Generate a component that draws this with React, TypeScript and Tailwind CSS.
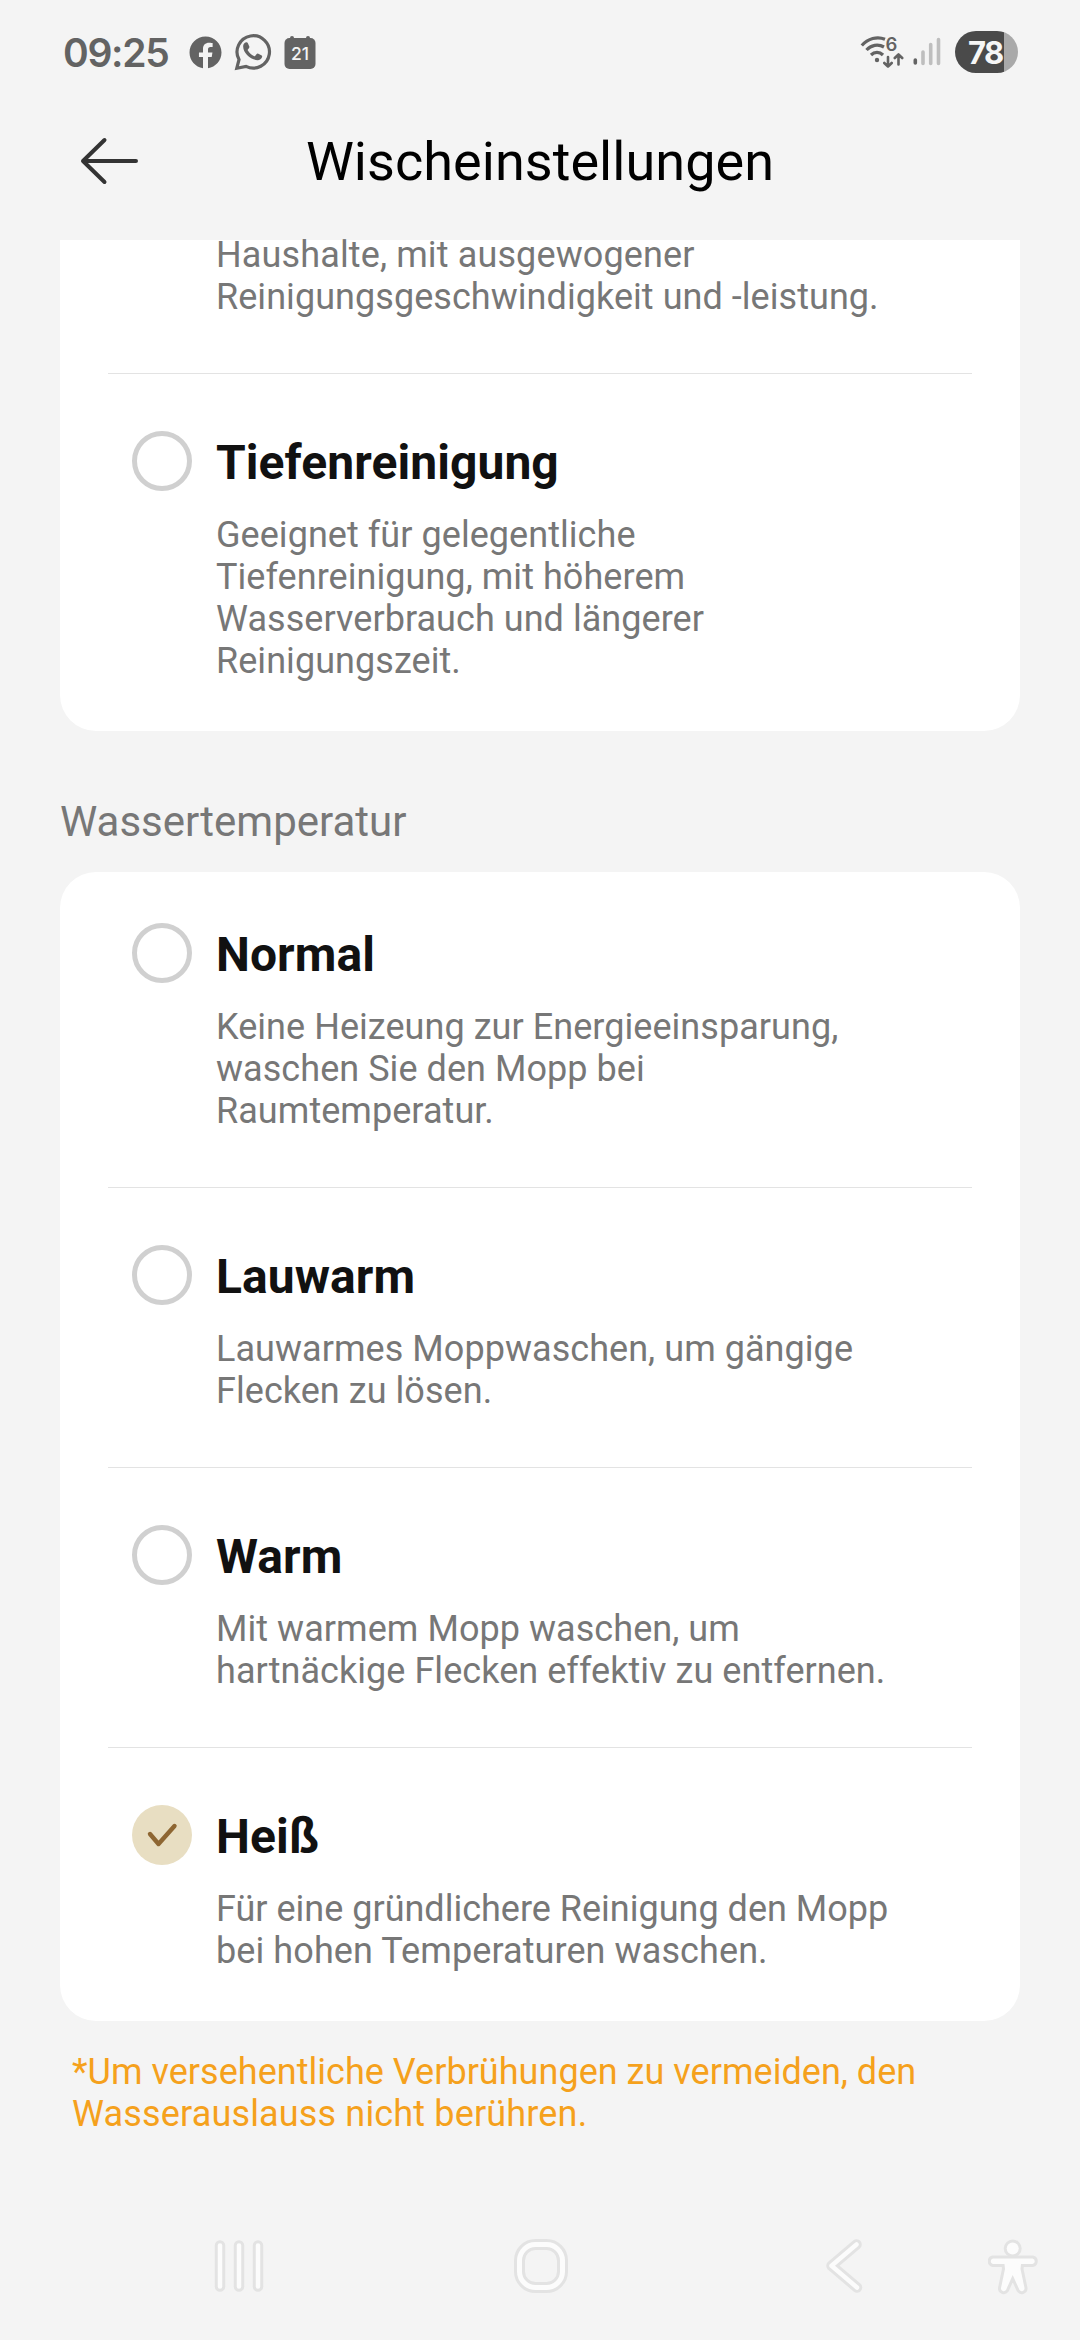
import React from "react";
import { FaFacebook } from "react-icons/fa";

type Line = { text: string; tracking?: string };
type Option = { title: string; lines: Line[]; selected?: boolean };

const temperatures: Option[] = [
  {
    title: "Normal",
    lines: [{ text: "Keine Heizeung zur Energieeinsparung," }, { text: "waschen Sie den Mopp bei" }, { text: "Raumtemperatur." }],
  },
  { title: "Lauwarm", lines: [{ text: "Lauwarmes Moppwaschen, um gängige" }, { text: "Flecken zu lösen." }] },
  { title: "Warm", lines: [{ text: "Mit warmem Mopp waschen, um" }, { text: "hartnäckige Flecken effektiv zu entfernen." }] },
  {
    title: "Heiß",
    lines: [
      { text: "Für eine gründlichere Reinigung den Mopp", tracking: "tracking-normal" },
      { text: "bei hohen Temperaturen waschen.", tracking: "tracking-[0.09px]" },
    ],
    selected: true,
  },
];

function Description({ lines }: { lines: Line[] }) {
  return (
    <p className="text-[36px] leading-[42px] whitespace-nowrap text-[#777777]">
      {lines.map(({ text, tracking = "tracking-[0.05px]" }) => (
        <span key={text} className={`block ${tracking}`}>{text}</span>
      ))}
    </p>
  );
}

function Radio({ selected }: { selected?: boolean }) {
  if (!selected) {
    return <span className="size-[60px] shrink-0 rounded-full border-[5px] border-[#d0d0d0]" />;
  }
  return (
    <span className="flex size-[60px] shrink-0 items-center justify-center rounded-full bg-[#e8dec2]">
      <svg className="size-[60px]" viewBox="0 0 60 60" fill="none" stroke="#8e6632" strokeWidth="4.4" strokeLinecap="round" strokeLinejoin="round">
        <path d="M18 29 L26.5 39 L42.5 21" />
      </svg>
    </span>
  );
}

function OptionRow({ option }: { option: Option }) {
  return (
    <div className="flex gap-6 px-[72px]">
      <Radio selected={option.selected} />
      <div className="pt-1">
        <h3 className="mb-[23px] text-[48px] leading-[56px] font-bold tracking-[0.07px] text-[#111111]">{option.title}</h3>
        <Description lines={option.lines} />
      </div>
    </div>
  );
}

function Divider() {
  return <hr className="mx-12 mt-[55px] mb-[57px] h-px border-0 bg-[#e3e3e3]" />;
}

function StatusBar() {
  return (
    <div className="flex h-[104px] items-center pr-[62px] pl-[63px] text-[#636363]">
      <span className="w-[126px] font-[Inter,sans-serif] text-[39px] leading-none font-semibold tracking-[-1.3px]">09:25</span>
      <FaFacebook className="size-[33px]" />
      <svg className="ml-[12px] h-[38px] w-[38px]" viewBox="0 0 38 38">
        <path d="M2.8 35.2 L5 26.6 A16.2 16.2 0 1 1 12 33.4 Z" fill="none" stroke="currentColor" strokeWidth="3.2" />
        <path
          transform="translate(-1.3 -0.7)"
          d="M10.5 13.5c.2-1.8 1.3-3.2 2.8-3.6 1-.2 1.5.1 1.9 1l1.4 3.2c.3.8.1 1.2-.4 1.8l-1 1.2c-.3.4-.3.7 0 1.2 1.5 2.5 3.4 4.2 6 5.4.6.3 1 .2 1.4-.2l1.4-1.7c.5-.6.9-.7 1.6-.4l3 1.5c.9.4 1 .8.8 1.7-.4 1.9-2.5 3.3-4.5 3.3-7.5-.2-15-8-14.4-14.4z"
          fill="currentColor"
        />
      </svg>
      <svg className="ml-[12px] h-[34px] w-[32px]" viewBox="0 0 32 34">
        <path d="M8 3v5M24 3v5" stroke="currentColor" strokeWidth="4" strokeLinecap="round" />
        <rect x="0.5" y="3" width="31" height="31" rx="5" fill="currentColor" />
        <text x="16" y="25" textAnchor="middle" fill="#f4f4f4" fontFamily="Inter, sans-serif" fontWeight="500" fontSize="17.5">21</text>
      </svg>
      <svg className="ml-auto h-[34px] w-[44px]" viewBox="0 0 44 34" fill="none" stroke="currentColor" strokeLinecap="round">
        <path d="M1.8 10.5C8 3.5 17 1 25 4.2" strokeWidth="3.2" strokeLinecap="butt" />
        <path d="M6.5 15C11 10 18 8.5 24 12" strokeWidth="3.2" strokeLinecap="butt" />
        <path d="M11 20C14.5 16.5 19.5 16.5 23 20" strokeWidth="3.2" strokeLinecap="butt" />
        <circle cx="17" cy="25" r="2.2" fill="currentColor" stroke="none" />
        <text x="31.5" y="15.8" textAnchor="middle" fill="currentColor" stroke="none" fontFamily="Inter, sans-serif" fontWeight="600" fontSize="18.5">6</text>
        <path d="M28 22V31.5M24.3 28L28 31.7L31.7 28M38.5 29.5V19.5M34.8 23L38.5 19.3L42.2 23" strokeWidth="2.6" strokeLinejoin="round" />
      </svg>
      <svg className="ml-[9px] h-[30px] w-[28px]" viewBox="0 0 28 30" strokeWidth="3.6" strokeLinecap="round">
        <path d="M2.3 26v-3" stroke="#636363" />
        <path d="M10 26.5v-11.5M17.7 26.5v-19M25.5 26.5V2.5" stroke="#bebebe" />
      </svg>
      <span className="ml-[14px] flex h-[42px] w-[63px] items-center overflow-hidden rounded-full bg-linear-to-r from-[#4a4a4a] from-78% to-[#a9a9a9] to-78% pl-[13px]">
        <span className="font-[Inter,sans-serif] text-[31px] leading-none font-bold tracking-[-1.5px] text-[#f6f6f6]">78</span>
      </span>
    </div>
  );
}

const navLayers = [
  { color: "#e3e3e3", wide: 10.5, ring: 11 },
  { color: "#fcfcfc", wide: 4.5, ring: 5 },
];

const figureBody =
  "M5 21.5H44.5A2.8 2.8 0 0 1 44.5 27H33L32.5 32L36.5 51A2.8 2.8 0 0 1 31.5 53L24.7 38L18 53A2.8 2.8 0 0 1 13 51L17 32L16.5 27H5A2.8 2.8 0 0 1 5 21.5Z";

function NavigationBar() {
  return (
    <nav className="mt-auto flex h-[148px] items-center pl-[214px]">
      <svg className="h-[56px] w-[50px]" viewBox="0 0 50 56" strokeLinecap="round">
        {navLayers.map((l) => (
          <path key={l.color} d="M6 7.5V48.5M25 7.5V48.5M44 7.5V48.5" stroke={l.color} strokeWidth={l.wide} />
        ))}
      </svg>
      <svg className="ml-[249px] size-[56px]" viewBox="0 0 56 56" fill="none">
        {navLayers.map((l) => (
          <rect key={l.color} x="6.5" y="6.5" width="43" height="43" rx="16" stroke={l.color} strokeWidth={l.ring} />
        ))}
      </svg>
      <svg className="ml-[255px] h-[56px] w-[40px]" viewBox="0 0 40 56" fill="none" strokeLinecap="round" strokeLinejoin="round">
        {navLayers.map((l) => (
          <path key={l.color} d="M32.5 6.5L7.5 27.8L33 49.5" stroke={l.color} strokeWidth={l.wide} />
        ))}
      </svg>
      <svg className="ml-[124px] h-[58px] w-[50px]" viewBox="0 0 50 58" fill="#fcfcfc" strokeLinejoin="round">
        <g stroke="#e3e3e3" strokeWidth="6">
          <circle cx="24.7" cy="11.5" r="6" />
          <path d={figureBody} />
        </g>
        <circle cx="24.7" cy="11.5" r="6" />
        <path d={figureBody} />
      </svg>
    </nav>
  );
}

export default function App() {
  return (
    <div className="flex h-[2340px] w-[1080px] flex-col overflow-hidden bg-[#f4f4f4] font-[Roboto,sans-serif]">
      <StatusBar />
      <header className="grid h-[136px] grid-cols-[1fr_auto_1fr] items-start px-[78px]">
        <svg className="mt-[32px] h-[50px] w-[62px]" viewBox="0 0 62 50" fill="none" stroke="#333333" strokeWidth="4" strokeLinecap="round" strokeLinejoin="round">
          <path d="M58 25H5M26.500 4L5 25L26.500 46" />
        </svg>
        <h1 className="mt-[26px] text-[54px] leading-[64px] tracking-[0.05px] text-black">Wischeinstellungen</h1>
      </header>
      <main className="px-[60px]">
        <section className="flex flex-col rounded-b-[36px] bg-white pb-[49px]">
          <div className="-mt-[6px] pl-[156px]">
            <Description
              lines={[
                { text: "Haushalte, mit ausgewogener", tracking: "tracking-[0.13px]" },
                { text: "Reinigungsgeschwindigkeit und -leistung." },
              ]}
            />
          </div>
          <Divider />
          <OptionRow
            option={{
              title: "Tiefenreinigung",
              lines: [
                { text: "Geeignet für gelegentliche" },
                { text: "Tiefenreinigung, mit höherem" },
                { text: "Wasserverbrauch und längerer" },
                { text: "Reinigungszeit." },
              ],
            }}
          />
        </section>
        <h2 className="mt-[66px] mb-[26px] text-[42px] leading-[49px] text-[#777777]">Wassertemperatur</h2>
        <section className="rounded-[36px] bg-white pt-[51px] pb-[49px]">
          {temperatures.map((option, index) => (
            <React.Fragment key={option.title}>
              {index > 0 && <Divider />}
              <OptionRow option={option} />
            </React.Fragment>
          ))}
        </section>
        <p className="mt-[30px] pl-3 text-[36px] leading-[42px] text-[#f5a11c]">
          <span className="block tracking-[0.03px]">*Um versehentliche Verbrühungen zu vermeiden, den</span>
          <span className="block tracking-[0.16px]">Wasserauslauss nicht berühren.</span>
        </p>
      </main>
      <NavigationBar />
    </div>
  );
}
